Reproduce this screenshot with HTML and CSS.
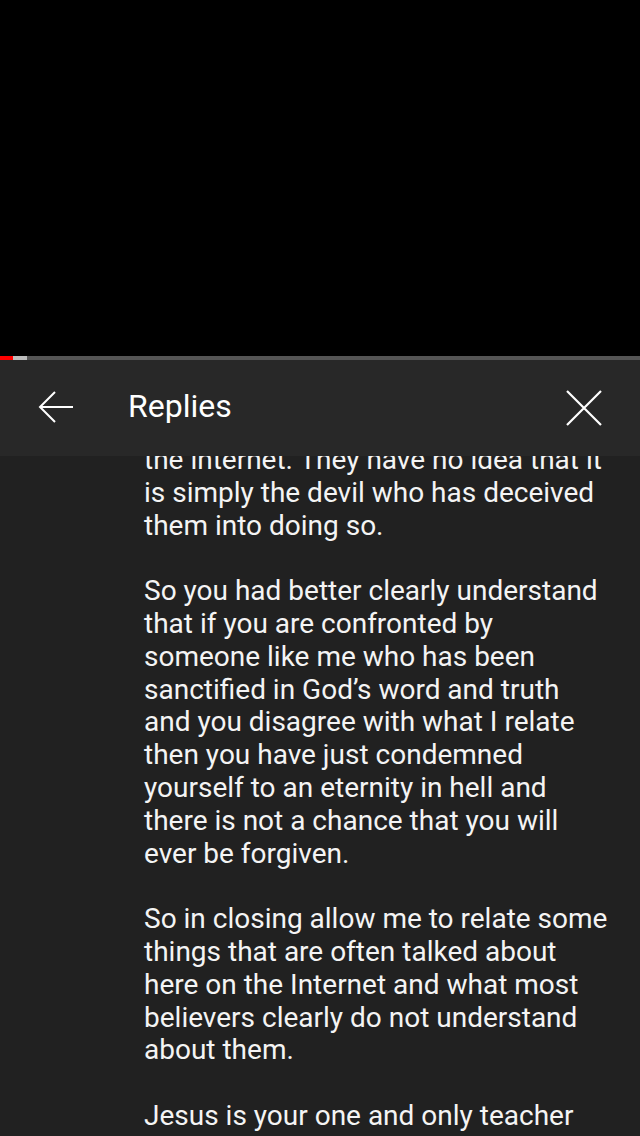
FILE: index.html
```html
<!DOCTYPE html>
<html lang="en">
<head>
    <meta charset="UTF-8">
    <meta name="viewport" content="width=device-width, initial-scale=1.0">
    <title>Replies</title>
    <link rel="stylesheet" href="styles.css">
</head>
<body>
    <div class="player">
        <div class="progress">
            <div class="played"></div>
            <div class="buffered"></div>
        </div>
    </div>

    <div class="panel">
        <div class="header">
            <button class="icon-btn back" aria-label="Back">
                <svg width="36" height="32" viewBox="0 0 36 32">
                    <path d="M35 16H2M17 1L2 16l15 15" fill="none" stroke="#fff" stroke-width="2"/>
                </svg>
            </button>
            <h1>Replies</h1>
            <button class="icon-btn close" aria-label="Close">
                <svg width="36" height="36" viewBox="0 0 36 36">
                    <path d="M1 1L35 35M35 1L1 35" fill="none" stroke="#fff" stroke-width="2.2"/>
                </svg>
            </button>
        </div>

        <div class="replies">
            <p class="comment">the internet. They have no idea that it
is simply the devil who has deceived
them into doing so.

So you had better clearly understand
that if you are confronted by
someone like me who has been
sanctified in God’s word and truth
and you disagree with what I relate
then you have just condemned
yourself to an eternity in hell and
there is not a chance that you will
ever be forgiven.

So in closing allow me to relate some
things that are often talked about
here on the Internet and what most
believers clearly do not understand
about them.

Jesus is your one and only teacher</p>
        </div>
    </div>
</body>
</html>
```

FILE: styles.css
```css
body {
    margin: 0;
    padding: 0;
    background-color: #212121;
    font-family: Roboto, "Noto Sans", sans-serif;
    color: #fff;
    height: 1136px;
    overflow: hidden;
}

.player {
    background-color: #000;
    height: 356px;
    position: relative;
}

.progress {
    position: absolute;
    left: 0;
    right: 0;
    bottom: -4px;
    height: 4px;
    background-color: #555;
    display: flex;
}

.played {
    width: 13px;
    background-color: #f00;
}

.buffered {
    width: 14px;
    background-color: #bbb;
}

.panel {
    padding-top: 4px;
    position: relative;
}

.header {
    position: relative;
    z-index: 2;
    height: 96px;
    background-color: #282828;
    display: flex;
    align-items: center;
}

.header h1 {
    margin: 0 0 0 54px;
    padding-bottom: 4px;
    flex: 1;
    font-size: 32px;
    font-weight: 400;
    color: #fff;
}

.icon-btn {
    background: none;
    border: none;
    padding: 0;
    display: flex;
    cursor: pointer;
}

.back {
    margin-left: 38px;
    margin-bottom: 2px;
}

.close {
    margin-right: 38px;
}

.replies {
    margin-top: -12px;
    padding: 0 16px 0 144px;
}

.comment {
    margin: 0;
    white-space: pre-wrap;
    font-size: 28px;
    line-height: 32.8px;
    color: #f4f4f4;
}
```
